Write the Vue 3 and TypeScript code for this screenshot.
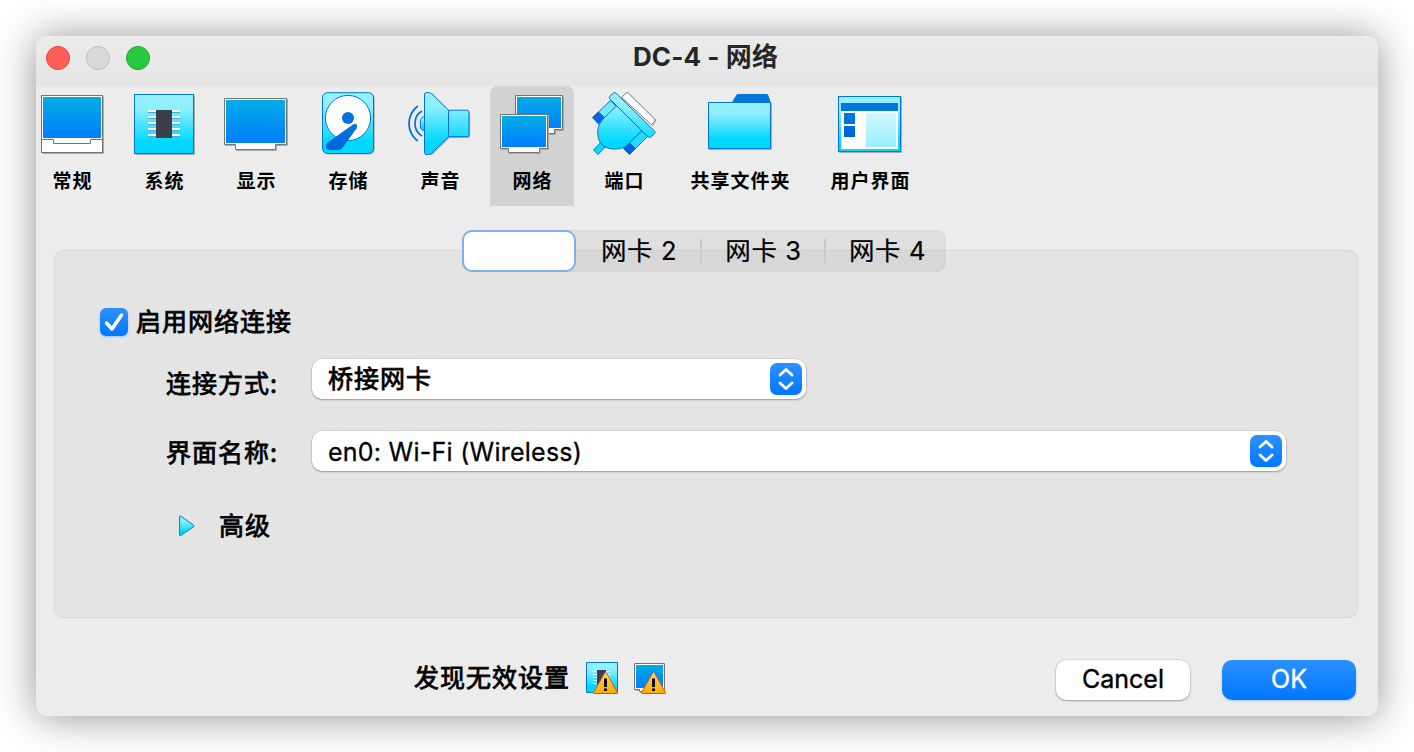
<script setup lang="ts">
import { ref } from 'vue'

type IconName = 'general' | 'system' | 'display' | 'storage' | 'audio' | 'network' | 'ports' | 'folder' | 'ui'
interface Section { id: IconName; label: string; size?: string }

const sections: Section[] = [
  { id: 'general', label: '常规' },
  { id: 'system', label: '系统' },
  { id: 'display', label: '显示' },
  { id: 'storage', label: '存储' },
  { id: 'audio', label: '声音' },
  { id: 'network', label: '网络' },
  { id: 'ports', label: '端口' },
  { id: 'folder', label: '共享文件夹', size: 'wide' },
  { id: 'ui', label: '用户界面', size: 'medium' },
]
const current = ref<IconName>('network')
const adapters: string[] = ['网卡 2', '网卡 3', '网卡 4']
const pins: number[] = [16, 22, 28, 34, 40]
</script>

<template>
  <div class="desktop">
    <svg class="defs" width="0" height="0" aria-hidden="true">
      <defs>
        <linearGradient id="screen" x1="0" y1="0" x2="0" y2="1"><stop offset="0" stop-color="#00ace4" /><stop offset="1" stop-color="#007dff" /></linearGradient>
        <linearGradient id="cyan" x1="0" y1="0" x2="0" y2="1"><stop offset="0" stop-color="#98f2ff" /><stop offset=".25" stop-color="#8deeff" /><stop offset=".8" stop-color="#00d9ff" /><stop offset="1" stop-color="#00d6ff" /></linearGradient>
        <linearGradient id="cyanPage" gradientUnits="userSpaceOnUse" x1="0" y1="0" x2="0" y2="62"><stop offset="0" stop-color="#98f2ff" /><stop offset=".25" stop-color="#8deeff" /><stop offset=".8" stop-color="#00d9ff" /><stop offset="1" stop-color="#00d6ff" /></linearGradient>
        <linearGradient id="deep" x1="0" y1="0" x2="0" y2="1"><stop offset="0" stop-color="#007ade" /><stop offset="1" stop-color="#0062da" /></linearGradient>
        <linearGradient id="pale" x1="0" y1="0" x2="0" y2="1"><stop offset="0" stop-color="#d0f8ff" /><stop offset="1" stop-color="#98eeff" /></linearGradient>
        <linearGradient id="amber" x1="0" y1="0" x2="0" y2="1"><stop offset="0" stop-color="#ffd765" /><stop offset="1" stop-color="#ffa900" /></linearGradient>
      </defs>
    </svg>

    <main class="window">
      <header class="titlebar">
        <span class="light red"></span><span class="light grey"></span><span class="light green"></span>
        <h1>DC-4 - 网络</h1>
      </header>

      <nav class="toolbar">
        <button v-for="s in sections" :key="s.id" class="tool" :class="[s.size, { active: current === s.id }]" @click="current = s.id">
          <svg class="icon" viewBox="0 0 64 64" width="64" height="64">
            <g v-if="s.id === 'general'">
              <path d="M2.5 61.5H63.500V4.500" fill="none" stroke="#aaa" />
              <rect x="1.500" y="3.500" width="61" height="57" fill="#fff" stroke="#747474" />
              <rect x="3" y="5" width="58" height="41" fill="url(#screen)" />
              <path d="M1.500 47.500H13.500V51.500H50.500V47.500H62.500" fill="none" stroke="#747474" />
            </g>
            <g v-else-if="s.id === 'system'">
              <path d="M3.500 62.500H62.500V3.500" fill="none" stroke="#aaa" />
              <rect x="2.500" y="2.500" width="59" height="59" fill="url(#cyan)" stroke="#0073de" />
              <g v-for="p in pins" :key="p">
                <path :d="`M16 ${p + 3}H48`" stroke="#fff" stroke-width="2" />
                <path :d="`M16 ${p + 4.5}H48`" stroke="#3faee8" />
              </g>
              <rect x="24" y="18" width="16" height="28" fill="#39404c" />
            </g>
            <g v-else-if="s.id === 'display'">
              <path d="M1 53.500H12.500V58.500H52.500V53.500H63.500V7" fill="none" stroke="#aaa" />
              <path d="M.5 6.500H62.500V52.500H51.500V57.500H11.500V52.500H.5Z" fill="#fff" stroke="#747474" />
              <rect x="2" y="8" width="59" height="43" fill="url(#screen)" />
            </g>
            <g v-else-if="s.id === 'storage'">
              <rect x="7.200" y="1.500" width="51.500" height="61" rx="5" fill="#aaa" />
              <rect x="6.500" y=".7" width="51" height="60.800" rx="5" fill="url(#cyan)" stroke="#0073de" />
              <circle cx="32" cy="26" r="22.600" fill="#fff" stroke="#0073de" />
              <circle cx="32" cy="26" r="6" fill="#0070dc" />
              <path d="M37 32.500Q39.500 31 41 33Q41.500 34.500 40.500 36.500L27.500 54.500Q25 58 21.500 58H12.500Q8 55 11 51Z" fill="url(#deep)" />
            </g>
            <g v-else-if="s.id === 'audio'">
              <path d="M17 1.500Q17 1.500 24 1.500L41.500 19H60Q62 19 62 21V44Q62 46 60 46H41.500L24 63H17Z" fill="#aaa" />
              <path d="M16.500 24.500Q12.300 25 12.300 30V34Q12.300 38.500 16.500 38.500Z" fill="url(#cyan)" stroke="#0073de" />
              <path d="M40.500 18.200H59Q61 18.200 61 20.500V42.500Q61 44.700 59 44.700H40.500Z" fill="url(#cyanPage)" stroke="#0073de" />
              <path d="M16.500 2Q16.500.6 19 .6Q22 .6 23.500 1.500L40.500 18.200V44.700L23.500 61.500Q22 62.500 18 62.500Q16.500 62 16.500 60Z" fill="url(#cyanPage)" stroke="#0073de" />
              <path d="M9.700 14Q1 21 1 31.500Q1 42 9.700 49M14 19Q7 23 7 31.500Q7 40 14 44" fill="none" stroke="#0073de" stroke-width="1.800" />
            </g>
            <g v-else-if="s.id === 'network'">
              <path d="M63.500 4.500V38.500H55.500V42.500H20" fill="none" stroke="#a5a5a5" />
              <path d="M15.500 3.500H62.500V37.500H54.500V41.500H20.500V37.500H15.500Z" fill="#fff" stroke="#747474" />
              <rect x="17" y="5" width="44" height="31" fill="url(#screen)" />
              <path d="M1 57.500H9.500V61.500H40.500V57.500H48.500V23" fill="none" stroke="#aaa" />
              <path d="M.5 22.500H47.500V56.500H39.500V60.500H8.500V56.500H.5Z" fill="#fff" stroke="#747474" />
              <rect x="2" y="24" width="44" height="31" fill="url(#screen)" />
            </g>
            <g v-else-if="s.id === 'ports'" stroke-linejoin="round">
              <path d="M30.500 6.500L36 1.500L64 28.500L60.500 34" fill="none" stroke="#aaa" />
              <path d="M29.700 5.500L34 1Q35.200 .2 36.500 1.200L62.500 26.800Q63.500 28 62.500 29.200L59.500 32.800Z" fill="#fff" stroke="#777" />
              <path d="M18.300 8.700L24.700 14.500L13 26L6.500 20Z" fill="#72eaff" stroke="#0073de" />
              <path d="M.4 25.500L6.300 20L13 26.500L6.500 32Z" fill="#0068d8" stroke="#0068d8" />
              <path d="M49.500 39L55.500 44.500L43.500 56.500L37.500 50.700Z" fill="#22ddff" stroke="#0073de" />
              <path d="M37.500 50.700L43.500 56.500L37.500 62.500L31.500 56.700Z" fill="#0062da" stroke="#0062da" />
              <path d="M8.700 50.500L13.300 54.800L6 62.500L1.500 58Z" fill="#10d7fb" stroke="#0073de" />
              <path d="M24.700 13.700L12.500 25.500C7.500 30.500 5.700 35 5.700 41Q5.700 46.500 8.200 50.500Q10.500 54.500 15 55.800C22 58 31 58 37.500 50.700L49.700 38.800Z" fill="url(#cyanPage)" stroke="#0073de" />
              <path d="M17.700 6.800Q16.800 5.700 17.700 4.500L21.500 .9Q22.700 .2 24 1.100L62.700 39.300Q63.600 40.500 62.500 41.700L58.500 45.200Q57.300 46 56 44.800Z" fill="url(#cyanPage)" stroke="#0073de" />
            </g>
            <g v-else-if="s.id === 'folder'">
              <path d="M1 57.500H63.500V11" fill="none" stroke="#aaa" />
              <path d="M23.500 11L28.500 2.700Q29 2 30 2H58.500Q59.700 2 60.200 3L63 11Z" fill="#0078dc" />
              <path d="M.5 10.500H62.500V56.500H.5Z" fill="url(#cyan)" stroke="#0073de" />
            </g>
            <g v-else>
              <path d="M1 60.500H63.500V5" fill="none" stroke="#aaa" />
              <rect x=".5" y="4.500" width="62" height="55" fill="url(#cyan)" stroke="#0073de" />
              <path d="M3 19H60V57H3Z" fill="#fff" />
              <path d="M3 11H60V19H3Z" fill="#0078dc" />
              <path d="M6 21H17V32H6ZM6 34H17V45H6Z" fill="url(#deep)" />
              <path d="M28 21H58V55H28Z" fill="url(#pale)" />
            </g>
          </svg>
          <span class="tool-label">{{ s.label }}</span>
        </button>
      </nav>

      <section class="pane">
        <div class="segments">
          <button class="segment selected" aria-label="网卡 1"></button>
          <button v-for="a in adapters" :key="a" class="segment">{{ a }}</button>
        </div>

        <div class="group">
          <label class="enable">
            <span class="check">
              <svg viewBox="0 0 28 28" width="28" height="28"><path d="M6.500 15L12 21L21.500 7" fill="none" stroke="#fff" stroke-width="3.500" stroke-linecap="round" stroke-linejoin="round" /></svg>
            </span>
            <span class="cjk">启用网络连接</span>
          </label>
          <div class="row attach">
            <span class="cjk row-label">连接方式:</span>
            <div class="select short">
              <span class="cjk">桥接网卡</span>
              <span class="stepper"><svg viewBox="0 0 32 32" width="32" height="32"><path d="M10 12L16 6.500L22 12M10 20L16 25.500L22 20" fill="none" stroke="#fff" stroke-width="2.800" stroke-linecap="round" stroke-linejoin="round" /></svg></span>
            </div>
          </div>
          <div class="row name">
            <span class="cjk row-label">界面名称:</span>
            <div class="select long">
              <span class="latin">en0: Wi-Fi (Wireless)</span>
              <span class="stepper"><svg viewBox="0 0 32 32" width="32" height="32"><path d="M10 12L16 6.500L22 12M10 20L16 25.500L22 20" fill="none" stroke="#fff" stroke-width="2.800" stroke-linecap="round" stroke-linejoin="round" /></svg></span>
            </div>
          </div>
          <div class="advanced">
            <svg viewBox="0 0 16 22" width="16" height="22"><path d="M.6 1.500Q.6.500 1.600 1L14.800 10.300Q15.500 11 14.800 11.600L1.600 20.500Q.6 21 .6 20Z" fill="url(#cyan)" stroke="#0078de" /></svg>
            <span class="cjk">高级</span>
          </div>
        </div>
      </section>

      <footer class="footer">
        <span class="cjk warning">发现无效设置</span>
        <svg class="badge" viewBox="0 0 32 32" width="32" height="32">
          <path d="M.5.5H31.500V30.500H.5Z" fill="url(#cyan)" stroke="#0073de" />
          <path d="M7 9.500H24M7 12.500H24M7 15.500H24M7 18.500H24M7 21.500H24" stroke="#fff" />
          <path d="M11 8H20V23H11Z" fill="#39404c" />
          <path d="M18.600 11Q19.500 9.500 20.500 11L31.500 30.500Q32 31.500 31 31.500H8Q7 31.500 7.500 30.500Z" fill="url(#amber)" stroke="#e24c12" />
          <path d="M18 16.500H21V25H18ZM18 26.500H21V29H18Z" fill="#080808" />
        </svg>
        <svg class="badge" viewBox="0 0 32 32" width="32" height="32">
          <path d="M1.500 28.500H6.500V30.500H24" fill="none" stroke="#aaa" />
          <path d="M.5 1.500H30.500V27.500H24.500V29.500H5.500V27.500H.5Z" fill="#fff" stroke="#747474" />
          <path d="M2 3H29V26H2Z" fill="url(#screen)" />
          <path d="M18.600 11Q19.500 9.500 20.500 11L31.500 30.500Q32 31.500 31 31.500H8Q7 31.500 7.500 30.500Z" fill="url(#amber)" stroke="#e24c12" />
          <path d="M18 16.500H21V25H18ZM18 26.500H21V29H18Z" fill="#080808" />
        </svg>
        <div class="actions">
          <button class="btn">Cancel</button>
          <button class="btn primary">OK</button>
        </div>
      </footer>
    </main>
  </div>
</template>

<style>
html, body { margin: 0; background: #fff; overflow: hidden; }
</style>

<style scoped>
.desktop { box-sizing: border-box; width: 1414px; height: 752px; padding: 36px; background: #fff; overflow: hidden; font-family: Inter, "Noto Sans CJK SC", sans-serif; color: #000; }
.defs { position: absolute; }
button { appearance: none; border: 0; padding: 0; margin: 0; background: none; color: inherit; font-family: inherit; }
.window { display: flex; flex-direction: column; width: 1342px; height: 680px; border-radius: 11px; background: #ececec; box-shadow: 0 1px 40px rgba(0, 0, 0, .43); }
.titlebar { position: relative; box-sizing: border-box; flex: none; display: flex; gap: 16px; height: 50px; padding: 10px; border-radius: 11px 11px 0 0; background: linear-gradient(#ebebeb, #e5e5e5); }
.light { box-sizing: border-box; width: 24px; height: 24px; border-radius: 50%; border: 1px solid; }
.red { background: #ff5f57; border-color: #e2463f; }
.grey { background: #d9d9d9; border-color: #bebebe; }
.green { background: #28c840; border-color: #17a82a; }
h1 { position: absolute; inset: 0 3px 0 0; margin: 0; text-align: center; font-size: 26px; line-height: 42px; font-weight: 700; letter-spacing: .1px; color: #262626; }
.toolbar { flex: none; display: flex; gap: 8px; height: 120px; margin-left: -6px; }
.tool { box-sizing: border-box; display: flex; flex-direction: column; align-items: center; width: 84px; height: 120px; padding-top: 6px; border-radius: 8px 8px 0 0; }
.tool.wide { width: 132px; }
.tool.medium { width: 112px; }
.tool.active { background: #d2d2d2; }
.icon { display: block; overflow: visible; }
.tool-label { margin-top: 9px; padding-left: 1px; font: 700 19px/30px "Noto Sans CJK SC", sans-serif; letter-spacing: 1px; white-space: nowrap; }
.pane { display: flex; flex-direction: column; align-items: center; padding: 24px 20px 0 18px; }
.segments { z-index: 1; box-sizing: border-box; display: flex; align-items: center; width: 484px; height: 42px; margin: 0 5px 0 0; border-radius: 10px; background: rgba(0, 0, 0, .055); box-shadow: inset 0 0 1px rgba(0, 0, 0, .2); }
.segment { flex: none; box-sizing: border-box; width: 124px; height: 24px; padding-left: 3px; font-size: 25.500px; line-height: 24px; letter-spacing: .6px; -webkit-text-stroke: .2px #000; white-space: nowrap; }
.segment + .segment + .segment { padding-left: 2px; border-left: 2px solid #c8c8c8; }
.segment.selected { width: 114px; height: 42px; border: 2px solid #7db0ec; border-radius: 10px; background: #fff; }
.group { box-sizing: border-box; width: 1304px; height: 368px; margin-top: -22px; padding: 57px 0 0 45px; border: 1px solid #d9d9d9; border-radius: 9px; background: #e4e4e4; }
.cjk { margin-top: -4px; font: 400 25px/30px "Noto Sans CJK SC", sans-serif; letter-spacing: 1px; -webkit-text-stroke: .8px #000; white-space: nowrap; }
.latin { padding-top: 2px; font-size: 25px; line-height: 30px; letter-spacing: .25px; -webkit-text-stroke: .3px #000; white-space: nowrap; }
.enable { display: flex; align-items: center; gap: 8px; height: 28px; }
.check { width: 28px; height: 28px; border-radius: 6px; background: linear-gradient(#2e92ff, #0077ff); box-shadow: 0 1px 2px rgba(0, 110, 255, .3); }
.row { display: flex; align-items: center; height: 40px; }
.attach { margin-top: 23px; }
.name { margin-top: 32px; }
.row-label { width: 178px; margin-right: 34px; text-align: right; }
.attach .row-label { margin-top: 5px; }
.name .row-label { margin-top: 0; }
.select { box-sizing: border-box; display: flex; align-items: center; justify-content: space-between; height: 40px; padding: 0 4px 0 16px; border-radius: 10px; background: #fff; box-shadow: 0 0 0 .5px rgba(0, 0, 0, .12), 0 1px 2px rgba(0, 0, 0, .3); }
.short { width: 494px; }
.long { width: 974px; }
.stepper { width: 32px; height: 32px; border-radius: 7px; background: linear-gradient(#2e92ff, #0077ff); }
.stepper svg, .check svg, .advanced svg { display: block; }
.advanced { display: flex; align-items: center; gap: 24px; height: 30px; margin: 40px 0 0 79px; }
.footer { display: flex; align-items: center; height: 40px; margin-top: 42px; padding: 0 22px 0 378px; }
.badge { margin: -4px 0 0 16px; overflow: visible; }
.warning { width: 156px; margin-top: -8px; }
.actions { display: flex; gap: 32px; margin-left: auto; }
.btn { width: 134px; height: 40px; padding-bottom: 2px; border-radius: 10px; background: #fff; font-size: 25px; line-height: 38px; -webkit-text-stroke: .4px; box-shadow: 0 0 0 .5px rgba(0, 0, 0, .14), 0 1px 2px rgba(0, 0, 0, .3); }
.primary { color: #fff; background: linear-gradient(#2b90ff, #0077ff); box-shadow: 0 1px 2px rgba(0, 110, 255, .3); }
</style>
